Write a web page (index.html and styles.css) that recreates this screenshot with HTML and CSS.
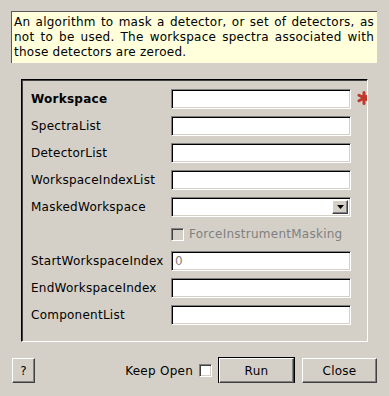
FILE: index.html
```html
<!DOCTYPE html>
<html lang="en">
<head>
    <meta charset="UTF-8">
    <title>MaskDetectors</title>
    <link rel="stylesheet" href="styles.css">
</head>
<body>
    <div class="dialog">
        <div class="tooltip">An algorithm to mask a detector, or set of detectors, as not to be used. The workspace spectra associated with those detectors are zeroed.</div>

        <div class="group">
            <div class="form">
                <label class="label bold">Workspace</label>
                <input class="field" type="text">
                <span class="star">
                    <svg width="14" height="14" viewBox="0 0 14 14">
                        <path d="M7 1.5 L7 12.5 M2 4.3 L12 9.7 M2 9.7 L12 4.3" stroke="#c0392b" stroke-width="3" stroke-linecap="round" fill="none"/>
                    </svg>
                </span>

                <label class="label">SpectraList</label>
                <input class="field" type="text">
                <span></span>

                <label class="label">DetectorList</label>
                <input class="field" type="text">
                <span></span>

                <label class="label">WorkspaceIndexList</label>
                <input class="field" type="text">
                <span></span>

                <label class="label">MaskedWorkspace</label>
                <div class="combo">
                    <span class="combo-text"></span>
                    <span class="combo-btn">
                        <svg width="7" height="4" viewBox="0 0 7 4"><path d="M0 0 H7 L3.5 4 Z" fill="#000"/></svg>
                    </span>
                </div>
                <span></span>

                <span></span>
                <label class="check-row disabled">
                    <span class="check check-off"></span>
                    ForceInstrumentMasking
                </label>
                <span></span>

                <label class="label">StartWorkspaceIndex</label>
                <input class="field field-muted" type="text" value="0">
                <span></span>

                <label class="label">EndWorkspaceIndex</label>
                <input class="field" type="text">
                <span></span>

                <label class="label">ComponentList</label>
                <input class="field" type="text">
                <span></span>
            </div>
        </div>

        <div class="actions">
            <button class="btn btn-help" type="button">?</button>
            <span class="spacer"></span>
            <label class="keep">Keep Open <span class="check"></span></label>
            <button class="btn btn-default" type="button">Run</button>
            <button class="btn btn-close" type="button">Close</button>
        </div>
    </div>
</body>
</html>
```

FILE: styles.css
```css
body {
    margin: 0;
    background: #d4d0c8;
    font-family: 'DejaVu Sans', 'Liberation Sans', sans-serif;
    font-size: 12px;
    letter-spacing: 0.25px;
    color: #000;
}

.dialog {
    display: flex;
    flex-direction: column;
    padding: 11px 12px 0 11px;
}

.tooltip {
    background: #ffffdc;
    border-left: 1px solid #5a5a5a;
    border-top: 1px solid #5a5a5a;
    height: 52px;
    box-sizing: border-box;
    padding: 3px 3px 0 2px;
    line-height: 15px;
    text-align: justify;
}

.group {
    margin: 16px 9px 0 10px;
    height: 263px;
    box-sizing: border-box;
    border: 1px solid;
    border-color: #000 #fff #fff #000;
    box-shadow: inset 1px 1px #404040;
    padding: 9px 0 0 9px;
    overflow: hidden;
}

.form {
    display: grid;
    grid-template-columns: 140px 180px 1fr;
    grid-auto-rows: 20px;
    row-gap: 7px;
    align-items: center;
}

.label {
    white-space: nowrap;
}

.bold {
    font-weight: bold;
}

.field {
    appearance: none;
    width: 180px;
    height: 20px;
    box-sizing: border-box;
    margin: 0;
    padding: 0 3px;
    background: #fff;
    border: 1px solid;
    border-color: #808080 #fff #fff #808080;
    box-shadow: inset 1px 1px #000, inset -1px -1px #d4d0c8;
    font: inherit;
    letter-spacing: inherit;
    outline: none;
}

.field-muted {
    color: #808080;
}

.star {
    display: flex;
    margin-left: 6px;
    margin-top: -2px;
}

.combo {
    display: flex;
    width: 180px;
    height: 20px;
    box-sizing: border-box;
    background: #fff;
    border: 1px solid;
    border-color: #808080 #fff #fff #808080;
    box-shadow: inset 1px 1px #000, inset -1px -1px #d4d0c8;
    padding: 2px;
}

.combo-text {
    flex: 1;
}

.combo-btn {
    width: 16px;
    box-sizing: border-box;
    display: flex;
    align-items: center;
    justify-content: center;
    background: #d4d0c8;
    border: 1px solid;
    border-color: #fff #404040 #404040 #fff;
    box-shadow: inset -1px -1px #808080;
}

.check-row {
    display: flex;
    align-items: center;
    gap: 5px;
    white-space: nowrap;
}

.disabled {
    color: #808080;
}

.check {
    display: inline-block;
    width: 13px;
    height: 13px;
    box-sizing: border-box;
    background: #fff;
    border: 1px solid;
    border-color: #808080 #fff #fff #808080;
    box-shadow: inset 1px 1px #404040, inset -1px -1px #d4d0c8;
}

.check-off {
    background: #d4d0c8;
}

.actions {
    display: flex;
    align-items: center;
    margin-top: 16px;
    height: 25px;
}

.spacer {
    flex: 1;
}

.keep {
    display: flex;
    align-items: center;
    gap: 6px;
    margin-right: 7px;
}

.btn {
    height: 25px;
    box-sizing: border-box;
    background: #d4d0c8;
    border: 1px solid;
    border-color: #fff #404040 #404040 #fff;
    box-shadow: inset -1px -1px #808080;
    font: inherit;
    letter-spacing: inherit;
    color: #000;
    padding: 0;
}

.btn-help {
    width: 23px;
    margin-left: 1px;
}

.btn-default {
    width: 75px;
    box-shadow: inset -1px -1px #808080, 0 0 0 1px #000;
    margin-right: 8px;
}

.btn-close {
    width: 75px;
}
```
